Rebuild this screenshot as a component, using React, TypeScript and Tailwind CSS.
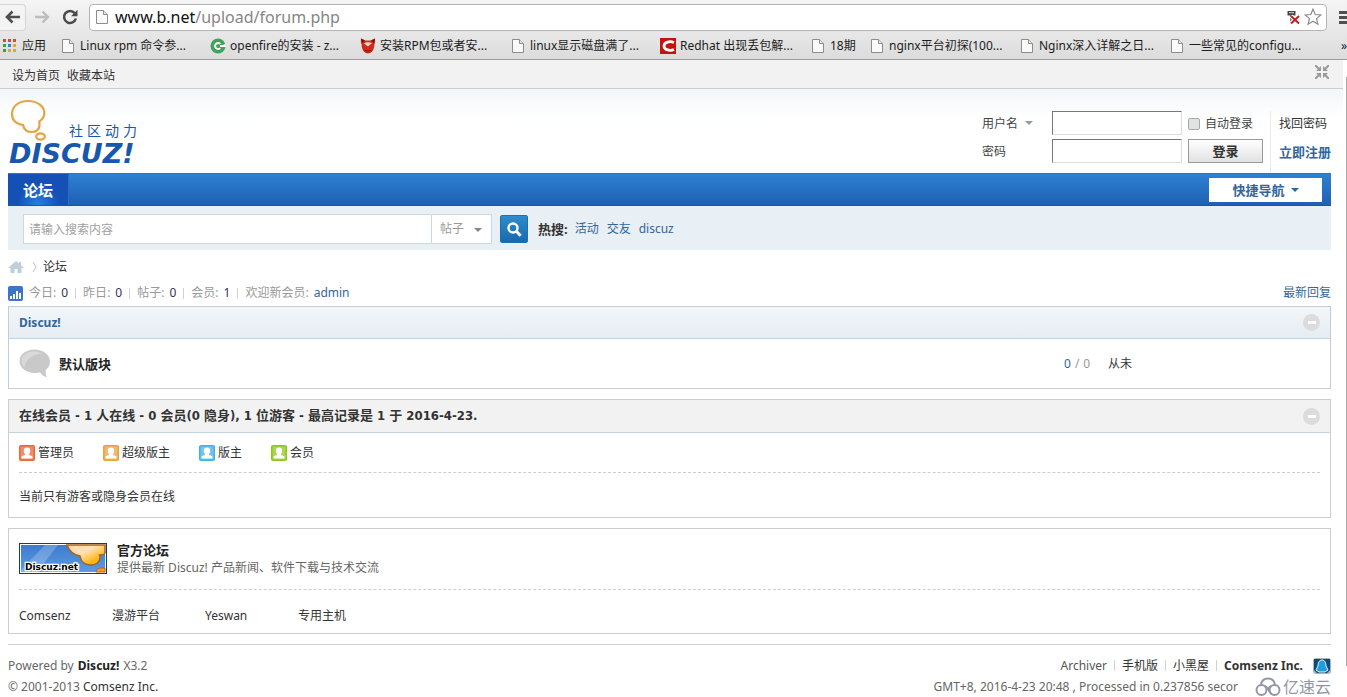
import React from 'react';

const LATIN_CJK = "font-['Noto_Sans','Noto_Sans_CJK_SC',sans-serif]";

function FileIcon() {
  return (
    <svg width="16" height="16" viewBox="0 0 16 16" className="shrink-0">
      <path d="M2.5 1.5h7l4 4v9h-11z" fill="#fafafa" stroke="#8c8c8c" />
      <path d="M9.500 1.500v4h4" fill="#e4e4e4" stroke="#8c8c8c" />
    </svg>
  );
}

function GreenIcon() {
  return (
    <svg width="16" height="16" viewBox="0 0 16 16" className="shrink-0">
      <circle cx="8" cy="8" r="7.500" fill="#3fa35c" />
      <path d="M16 5.500 10.500 8 16 8.500z" fill="#e3e3e3" />
      <path d="M10.200 5.900A3 3 0 1 0 10.200 10.100M10 8h6" fill="none" stroke="#fff" strokeWidth="2" />
    </svg>
  );
}

function RedFoxIcon() {
  return (
    <svg width="16" height="16" viewBox="0 0 16 16" className="shrink-0">
      <path d="M1 .5 5 2.500h6L15 .5c.4 3 0 4.500-.6 6C14.500 11.500 11.500 15.500 8 15.500S1.500 11.500 1.600 6.500C1 5 .6 3.500 1 .5z" fill="#d02a18" />
      <path d="M4 5.500c2-1.500 5-1.500 8-.5L8 8.500z" fill="#f6d9cf" />
      <path d="M4.500 12c2 1.500 5 1.500 7 0" fill="none" stroke="#8d0d05" />
      <path d="M1 .5 5 2.500 2 5zM15 .5l-4 2 3 2.500z" fill="#6b1a12" />
    </svg>
  );
}

function RedCIcon() {
  return (
    <svg width="16" height="16" viewBox="0 0 16 16" className="shrink-0">
      <rect width="16" height="16" fill="#c3120f" />
      <path d="M14 4.500C10 2.800 4 4 4 8s6 5.200 10 3.500" fill="none" stroke="#fff" strokeWidth="2.800" />
    </svg>
  );
}

function AppsIcon() {
  const colors = ['#d64937', '#d64937', '#d64937', '#3c9c50', '#3b7ddd', '#e3a72f', '#3c9c50', '#e3a72f', '#e3a72f'];
  return (
    <svg width="16" height="16" viewBox="0 0 16 16" className="shrink-0">
      {colors.map((c, i) => (
        <rect key={i} x={1 + (i % 3) * 5} y={1 + Math.floor(i / 3) * 5} width="3" height="3" fill={c} />
      ))}
    </svg>
  );
}

const bookmarks = [
  { icon: <FileIcon />, label: 'Linux rpm 命令参...' },
  { icon: <GreenIcon />, label: 'openfire的安装 - z...' },
  { icon: <RedFoxIcon />, label: '安装RPM包或者安...' },
  { icon: <FileIcon />, label: 'linux显示磁盘满了...' },
  { icon: <RedCIcon />, label: 'Redhat 出现丢包解...' },
  { icon: <FileIcon />, label: '18期', short: true },
  { icon: <FileIcon />, label: 'nginx平台初探(100...' },
  { icon: <FileIcon />, label: 'Nginx深入详解之日...' },
  { icon: <FileIcon />, label: '一些常见的configu...' },
];

function BrowserBar() {
  return (
    <div className="border-b border-[#9c9c9c] bg-linear-to-b from-[#f5f5f5] to-[#dcdcdc]">
      <div className="flex h-[34px] items-center">
        <button aria-label="后退" className="flex h-[27px] w-[26px] items-center justify-center rounded-r-sm border border-l-0 border-[#d6d6d6] bg-[#f3f3f3]">
          <svg width="16" height="14" viewBox="0 0 16 14">
            <path d="M7.500 1.500 2 7l5.500 5.500M2 7h13" fill="none" stroke="#4f4f4f" strokeWidth="2.600" />
          </svg>
        </button>
        <button aria-label="前进" className="ml-2 flex h-6 w-4 items-center justify-center">
          <svg width="16" height="14" viewBox="0 0 16 14">
            <path d="M8.500 1.500 14 7l-5.500 5.500M14 7H1" fill="none" stroke="#bdbdbd" strokeWidth="2.400" />
          </svg>
        </button>
        <button aria-label="重新加载" className="ml-3 flex h-6 w-4 items-center justify-center">
          <svg width="16" height="16" viewBox="0 0 16 16">
            <path d="M12.800 4.200A6 6 0 1 0 13.900 9.500" fill="none" stroke="#4a4a4a" strokeWidth="2.500" />
            <path d="M15.500 .8v6.500H9z" fill="#4a4a4a" />
          </svg>
        </button>
        <div className="ml-[11px] flex h-[27px] flex-1 items-center rounded-sm border border-[#b4b4b4] bg-white px-1">
          <FileIcon />
          <a href="#url" className="ml-[5px] flex-1 text-[16px] leading-6 text-[#858585]">
            <span className="text-[#111]">www.b.net</span>/upload/forum.php
          </a>
          <svg width="14" height="16" viewBox="0 0 14 16" className="mr-1">
            <path d="M1.500 2h8v4.500h-8z" fill="#444" />
            <path d="M3 3.700h5" stroke="#ddd" />
            <path d="M5.500 6v7" stroke="#777" strokeWidth="3" />
            <path d="m5 7 8 7.500M13 7 5 14.500" stroke="#fff" strokeWidth="4" />
            <path d="m5 7 8 7.500M13 7 5 14.500" stroke="#c11f1f" strokeWidth="2" />
          </svg>
          <svg width="18" height="18" viewBox="0 0 18 18">
            <path d="m9 1.200 2.200 5.300 5.700.4-4.400 3.700 1.400 5.600L9 13.200l-4.900 3 1.400-5.600L1.100 6.900l5.700-.4z" fill="#fff" stroke="#8a8a8a" strokeWidth="1.200" />
          </svg>
        </div>
        <button aria-label="菜单" className="ml-3 flex w-2 flex-col gap-[2px] overflow-hidden">
          <span className="h-[3px] w-4 bg-[#505050]" />
          <span className="h-[3px] w-4 bg-[#505050]" />
          <span className="h-[3px] w-4 bg-[#505050]" />
        </button>
      </div>
      <nav className="flex h-[25px] items-center overflow-hidden pb-[2px] pl-[2px] text-[12px] whitespace-nowrap text-[#1c1c1c]">
        <a href="#apps" className="flex w-[58px] shrink-0 items-center gap-1">
          <AppsIcon />
          应用
        </a>
        {bookmarks.map((b) => (
          <a key={b.label} href="#bookmark" className={`flex shrink-0 items-center gap-1 ${b.short ? 'w-[59px]' : 'w-[150px]'}`}>
            {b.icon}
            {b.label}
          </a>
        ))}
        <button aria-label="更多书签" className="ml-auto w-[6px]">»</button>
      </nav>
    </div>
  );
}

function Logo() {
  return (
    <svg width="132" height="70" viewBox="0 0 132 70" role="img" aria-label="Discuz! 社区动力" className="overflow-visible">
      <path d="M20 3C11 3 4 8 4 16c0 7 5 10 11 11 1 5 4 7 8.500 7 4.500 0 7.500-2.500 8-6.500 0-1.500-.2-3-.2-4 3-2 5-4.500 5-8.500C36.300 8 29 3 20 3z" fill="#fff" stroke="#e5a544" strokeWidth="2.200" />
      <ellipse cx="32.500" cy="38.500" rx="4.300" ry="3.200" fill="#fff" stroke="#e5a544" strokeWidth="2.200" />
      <g fill="#1757ad">
        <text x="61" y="38" fontSize="14" fontFamily="'Noto Sans CJK SC', sans-serif">
          <tspan x="61">社</tspan>
          <tspan x="79">区</tspan>
          <tspan x="97">动</tspan>
          <tspan x="115">力</tspan>
        </text>
        <text x="1" y="65" fontSize="27" fontWeight="bold" fontStyle="italic" fontFamily="'DejaVu Sans', sans-serif">DISCUZ!</text>
      </g>
    </svg>
  );
}

function Caret({ className }: { className: string }) {
  return (
    <svg width="8" height="4" viewBox="0 0 8 4" className={className}>
      <path d="M0 0h8L4 4z" fill="currentColor" />
    </svg>
  );
}

function LoginForm() {
  return (
    <form className="flex pt-[22px]">
      <div className="grid grid-cols-[64px_130px_75px] grid-rows-[24px_24px] items-center gap-x-[6px] gap-y-1 text-[#444]">
        <div className="relative">
          <select aria-label="登录方式" className="block w-full appearance-none bg-transparent pt-px">
            <option>用户名</option>
          </select>
          <Caret className="pointer-events-none absolute top-[7px] left-[43px] text-[#999]" />
        </div>
        <input aria-label="用户名" className="h-6 w-full border border-t-[#777] border-r-[#ddd] border-b-[#ddd] border-l-[#777] bg-white px-1" />
        <label className="flex items-center gap-[5px] pt-[2px]">
          <input type="checkbox" className="size-3 appearance-none rounded-xs border border-[#a8a8a8] bg-[#e2e2e2]" />
          自动登录
        </label>
        <label htmlFor="password" className="pt-[2px]">密码</label>
        <input id="password" type="password" className="h-6 w-full border border-t-[#777] border-r-[#ddd] border-b-[#ddd] border-l-[#777] bg-white px-1" />
        <button type="button" className="h-6 border border-[#999] bg-linear-to-b from-white to-[#e2e2e2] text-[13px] leading-5 font-bold text-[#333]">
          登录
        </button>
      </div>
      <div className="ml-[7px] grid w-[61px] grid-rows-[24px_24px] content-start items-center gap-y-1 border-l border-[#e6ebf0] pl-2 whitespace-nowrap">
        <a href="#lost" className="pt-[2px]">找回密码</a>
        <a href="#register" className="pt-[2px] text-[13px] font-bold text-[#336699]">立即注册</a>
      </div>
    </form>
  );
}

function SearchBar() {
  return (
    <div className="flex h-11 items-center bg-[#e8eff5] pt-[2px] pl-[15px]">
      <input aria-label="搜索" placeholder="请输入搜索内容" className="h-[30px] w-[409px] border border-[#ced9df] bg-white px-[5px] placeholder:text-[#a0a0a0]" />
      <div className="relative h-[30px] w-[60px] border-y border-r border-[#ced9df] bg-white">
        <select aria-label="搜索类型" className="h-full w-full appearance-none pl-2 text-[#999]">
          <option>帖子</option>
        </select>
        <Caret className="pointer-events-none absolute top-[13px] right-[9px] text-[#888]" />
      </div>
      <button aria-label="搜索按钮" className="ml-2 flex size-7 items-center justify-center rounded-xs border border-[#1f6fae] bg-linear-to-b from-[#2f8bcb] to-[#186ab0]">
        <svg width="15" height="15" viewBox="0 0 15 15" fill="none" stroke="#fff">
          <circle cx="6" cy="6" r="4.500" strokeWidth="2.400" />
          <path d="m9.300 9.300 4.400 4.400" strokeWidth="3" />
        </svg>
      </button>
      <strong className="ml-[10px] text-[13px]">热搜:</strong>
      <div className="ml-[7px] flex gap-2 text-[#336699]">
        <a href="#activity">活动</a>
        <a href="#friends">交友</a>
        <a href="#discuz">discuz</a>
      </div>
    </div>
  );
}

function Separator() {
  return <span className="mx-[7px] h-[11px] w-px bg-[#ccd4d9]" />;
}

function CollapseButton() {
  return (
    <button aria-label="收起" className="flex size-[17px] items-center justify-center rounded-full bg-[#dcdcdc]">
      <span className="h-[3px] w-2 bg-white" />
    </button>
  );
}

const stats = [
  ['今日', '0'],
  ['昨日', '0'],
  ['帖子', '0'],
  ['会员', '1'],
];

const roles = [
  { label: '管理员', color: 'text-[#ee6435]', width: 'w-[84px]' },
  { label: '超级版主', color: 'text-[#e9a23c]', width: 'w-24' },
  { label: '版主', color: 'text-[#44b2e0]', width: 'w-[72px]' },
  { label: '会员', color: 'text-[#8cc814]', width: 'w-[72px]' },
];

function RoleIcon({ className }: { className: string }) {
  return (
    <svg width="16" height="16" viewBox="0 0 16 16" className={className}>
      <rect x=".5" y=".5" width="15" height="15" rx="1" fill="currentColor" stroke="currentColor" />
      <rect x="1.500" y="1.500" width="13" height="13" fill="#fff" opacity=".25" />
      <path d="M8 2.500c2.200 0 3.200 1.200 3.200 3.200 0 1.600-.5 2.600-1.200 3.200v1.100l3.500 1.200V13.500h-11v-2.300L6 10V8.900C5.300 8.300 4.800 7.300 4.800 5.700c0-2 1-3.200 3.200-3.200z" fill="#fff" />
    </svg>
  );
}

function DiscuzBanner() {
  return (
    <svg width="88" height="31" viewBox="0 0 88 31" role="img" aria-label="Discuz.net">
      <defs>
        <linearGradient id="sky" x1="0" y1="0" x2="0" y2="1">
          <stop offset="0" stopColor="#3f7bca" />
          <stop offset="1" stopColor="#5a9ae6" />
        </linearGradient>
        <linearGradient id="sun" x1="0" y1="0" x2="1" y2="1">
          <stop offset="0" stopColor="#ffd9a8" />
          <stop offset=".4" stopColor="#ffe2b8" />
          <stop offset=".75" stopColor="#fdb515" />
        </linearGradient>
      </defs>
      <rect x=".5" y=".5" width="87" height="30" fill="#fff" stroke="#143c6c" />
      <rect x="2" y="2" width="84" height="27" fill="url(#sky)" />
      <path d="M26 2h13L18 29H2v-2z" fill="#fff" opacity=".22" />
      <path d="M48 2c2 5 6 10 13 11 1 6 5 9 11 9 5 0 9-3 9-7 0-1 0-2-.5-3 3 0 5-1 5.500-2V2z" fill="url(#sun)" stroke="#a8601f" strokeWidth="1.500" />
      <path d="M77 29c0-3 3-4 6-4h3v4z" fill="#f79b22" stroke="#b8651b" />
      <text x="6" y="27" fontSize="9" fontWeight="bold" fontFamily="'DejaVu Sans', sans-serif" stroke="#fff" strokeWidth="2.500" paintOrder="stroke" fill="#000">
        Discuz.net
      </text>
    </svg>
  );
}

function Watermark() {
  return (
    <div className="flex h-[22px] items-center gap-[2px] text-[16px] leading-[22px] text-[#9197a6]">
      <svg width="26" height="20" viewBox="0 0 26 20" fill="none" stroke="currentColor" strokeWidth="2">
        <path d="M6 8C6.500 4 9 1.500 13 1.500S19.500 4 20 8" />
        <circle cx="6.500" cy="13" r="5" />
        <circle cx="19.500" cy="13" r="5" />
        <path d="M9.500 9c3 .5 4 5 7 8M16.500 9c-2 .5-3 2-4 4" />
      </svg>
      亿速云
    </div>
  );
}

export default function App() {
  return (
    <div className={`min-h-screen bg-white text-[12px] leading-[18px] text-[#333] ${LATIN_CJK}`}>
      <BrowserBar />
      <div className="flex">
        <div className="min-w-0 flex-1">
          <div className="flex h-[29px] items-center justify-between border-b border-[#cdcdcd] bg-[#f2f2f2] pr-[14px] pl-3">
            <div className="flex gap-[7px] pt-[3px]">
              <a href="#home">设为首页</a>
              <a href="#favorite">收藏本站</a>
            </div>
            <button aria-label="切换到窄版" className="mb-[5px]">
              <svg width="14" height="14" viewBox="0 0 14 14" stroke="#999" strokeWidth="2" fill="#999">
                <path d="m0 0 4 4M14 0l-4 4M0 14l4-4M14 14l-4-4" />
                <path stroke="none" d="M6 1v5H1zM8 1v5h5zM6 13V8H1zM8 13V8h5z" />
              </svg>
            </button>
          </div>

          <div className="bg-linear-to-b from-[#f2f6f9] to-white to-[28px] pr-3 pl-2">
            <header className="flex h-[84px] justify-between">
              <div className="pt-[9px]">
                <Logo />
              </div>
              <LoginForm />
            </header>

            <nav className="flex h-[33px] items-center justify-between border-t border-b border-t-[#3f74ab] border-b-[#1f5796] bg-linear-to-b from-[#2d80d3] to-[#1f60b3] pr-[9px]">
              <a href="#forum" className="flex h-full w-[61px] items-center justify-center border-r border-[#2c6cc0] bg-radial-[at_50%_100%] from-[#2382de] to-[#1550b4] to-50% text-[15px] font-bold text-white">
                论坛
              </a>
              <button className="flex h-6 w-[113px] items-center justify-center gap-[6px] bg-white text-[13px] font-bold text-[#336699]">
                快捷导航
                <Caret className="text-[#336699]" />
              </button>
            </nav>
            <SearchBar />

            <div className="flex h-[34px] items-center">
              <svg width="16" height="14" viewBox="0 0 16 14">
                <path d="M8 1 0 8h2.500v5h4V9h3v4h4V8H16L13 5.300V2h-2v1.500z" fill="#bccfdb" />
              </svg>
              <svg width="5" height="10" viewBox="0 0 5 10" className="mr-[6px] ml-2">
                <path d="m1 0 3 5-3 5" fill="none" stroke="#b4bec6" />
              </svg>
              <a href="#forum">论坛</a>
            </div>

            <div className="flex h-[22px] items-center justify-between pb-[4px]">
              <div className="flex items-center text-[#999]">
                <svg width="15" height="15" viewBox="0 0 15 15" className="mr-[6px]">
                  <rect width="15" height="15" rx="2" fill="#3a75c9" />
                  <path d="M2 10h2v3H2zM5 8h2v5H5zM8 5h2v8H8zM11 7h2v6h-2z" fill="#fff" />
                </svg>
                {stats.map(([name, value]) => (
                  <React.Fragment key={name}>
                    <span className="flex gap-[5px]">
                      <span>{name}:</span>
                      <span className="text-[#333355]">{value}</span>
                    </span>
                    <Separator />
                  </React.Fragment>
                ))}
                <span className="flex gap-[5px]">
                  <span>欢迎新会员:</span>
                  <a href="#admin" className="text-[#336699]">admin</a>
                </span>
              </div>
              <a href="#latest" className="text-[#336699]">最新回复</a>
            </div>

            <section className="border border-[#c4cdd6]">
              <h2 className="flex h-8 items-center justify-between border-b border-[#c2d5e3] bg-linear-to-b from-[#f2f6f9] to-[#e6edf2] px-[10px] font-bold text-[#336699]">
                <a href="#discuz">Discuz!</a>
                <CollapseButton />
              </h2>
              <table className="w-full">
                <tbody>
                  <tr className="h-[49px]">
                    <td className="w-[50px] pl-[10px]">
                      <svg width="32" height="29" viewBox="0 0 32 29">
                        <path d="M15.500.5C7 .5.500 5.500.500 12S7 24 15.500 24c2 0 4-.2 5.500-.8 1.500 2.500 4 4.500 7 5-1.300-2-1.600-4-1.200-7.200C29.500 19 31 16 31 12.500 31 5.500 24 .500 15.500.5z" fill="#c9c9c9" />
                        <path d="M15 2.500C8 2.500 2.500 6.500 2.500 12c0 3 1.500 5 3 6.500C6 11 13 5 23 4.500 20.500 3.200 18 2.500 15 2.500z" fill="#d9d9d9" />
                      </svg>
                    </td>
                    <td className="text-[13px] font-bold text-[#222]">
                      <a href="#default">默认版块</a>
                    </td>
                    <td className="w-[44px] whitespace-nowrap text-[#999]">
                      <div className="flex gap-1">
                        <span className="text-[#336699]">0</span>
                        <span>/</span>
                        <span>0</span>
                      </div>
                    </td>
                    <td className="w-[222px]">从未</td>
                  </tr>
                </tbody>
              </table>
            </section>

            <section className="mt-[10px] border border-[#cdcdcd]">
              <h2 className="flex h-[33px] items-center justify-between border-b border-[#c2d5e3] bg-[#f2f2f2] px-[10px] font-['DejaVu_Sans_Condensed','Noto_Sans_CJK_SC',sans-serif] text-[13px] font-bold">
                <span>在线会员 - 1 人在线 - 0 会员(0 隐身), 1 位游客 - 最高记录是 1 于 2016-4-23.</span>
                <CollapseButton />
              </h2>
              <div className="px-[10px]">
                <ul className="flex h-10 items-center border-b border-dashed border-[#cdcdcd] pt-px">
                  {roles.map((r) => (
                    <li key={r.label} className={`flex items-center gap-[3px] ${r.width}`}>
                      <RoleIcon className={r.color} />
                      {r.label}
                    </li>
                  ))}
                </ul>
                <p className="pt-[15px] pb-[11px]">当前只有游客或隐身会员在线</p>
              </div>
            </section>

            <section className="mt-[10px] border border-[#cdcdcd] px-[10px]">
              <div className="flex h-[61px] items-center gap-[10px] border-b border-dashed border-[#cdcdcd] pb-px">
                <a href="#official">
                  <DiscuzBanner />
                </a>
                <div>
                  <h3 className="text-[13px] leading-[18px] font-bold text-[#222]">官方论坛</h3>
                  <p className="text-[#666]">提供最新 Discuz! 产品新闻、软件下载与技术交流</p>
                </div>
              </div>
              <ul className="flex h-[43px] items-center pt-2">
                <li className="w-[93px]"><a href="#comsenz">Comsenz</a></li>
                <li className="w-[93px]"><a href="#manyou">漫游平台</a></li>
                <li className="w-[93px]"><a href="#yeswan">Yeswan</a></li>
                <li className="w-[93px]"><a href="#hosting">专用主机</a></li>
              </ul>
            </section>

            <footer className="mt-[10px] flex justify-between border-t border-[#cdcdcd] pt-[10px] text-[#666]">
              <div>
                <p className="flex gap-1 leading-[22px]">
                  <span>Powered by</span>
                  <a href="#discuz" className="font-bold text-[#222]">Discuz!</a>
                  <span>X3.2</span>
                </p>
                <p className="leading-[20px]">
                  © 2001-2013 <a href="#comsenz" className="text-[#333]">Comsenz Inc.</a>
                </p>
              </div>
              <div>
                <div className="flex h-[21px] items-center justify-end whitespace-nowrap text-[#333]">
                  <a href="#archiver" className="text-[#555]">Archiver</a>
                  <Separator />
                  <a href="#mobile">手机版</a>
                  <Separator />
                  <a href="#darkroom">小黑屋</a>
                  <Separator />
                  <a href="#comsenz" className="font-bold">Comsenz Inc.</a>
                  <svg width="18" height="16" viewBox="0 0 18 16" className="ml-[10px]">
                    <rect width="18" height="16" rx="3" fill="#a7b4bc" />
                    <path d="M1 1h16v11l-3 3H4l-3-3z" fill="#0e4a7c" />
                    <path d="M9 2c3 0 4 3 4 6l2 4-3 2H6l-3-2 2-4c0-3 1-6 4-6z" fill="#1d9fdb" stroke="#e8f6fd" />
                  </svg>
                </div>
                <div className="flex h-[22px] items-center justify-end gap-[17px]">
                  <p className="whitespace-nowrap">GMT+8, 2016-4-23 20:48 , Processed in 0.237856 secor</p>
                  <Watermark />
                </div>
              </div>
            </footer>
          </div>
        </div>
        <div className="mt-[17px] mb-8 w-1 border-r border-[#a8a8a8]" />
      </div>
    </div>
  );
}
